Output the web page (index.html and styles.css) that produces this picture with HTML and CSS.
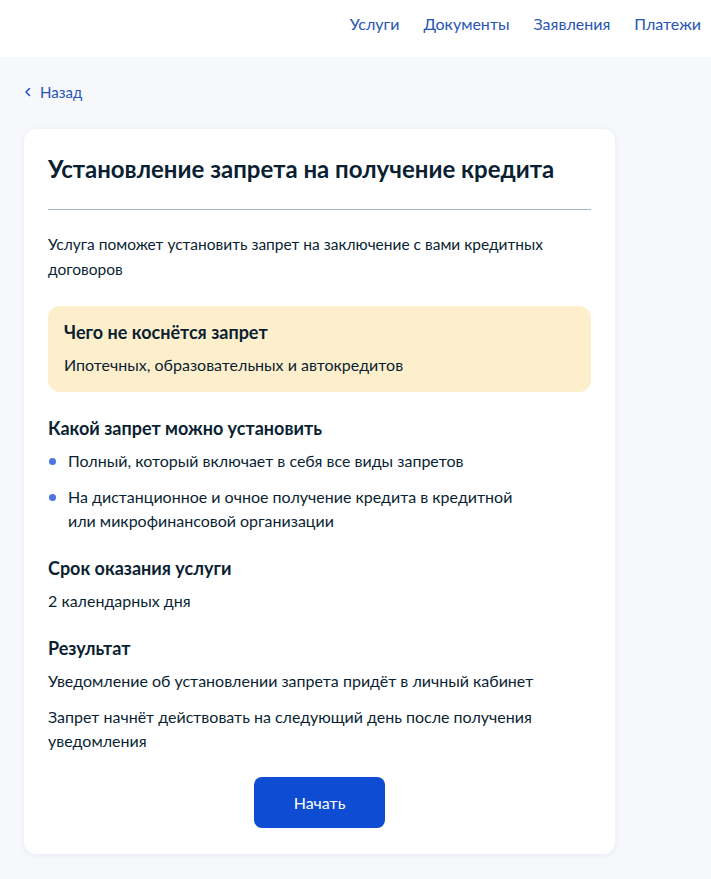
FILE: index.html
```html
<!DOCTYPE html>
<html lang="ru">
<head>
  <meta charset="UTF-8">
  <meta name="viewport" content="width=device-width, initial-scale=1.0">
  <title>Установление запрета на получение кредита</title>
  <link rel="stylesheet" href="styles.css">
</head>
<body>
  <header class="top-bar">
    <nav class="top-nav">
      <a href="#">Услуги</a>
      <a href="#">Документы</a>
      <a href="#">Заявления</a>
      <a href="#">Платежи</a>
    </nav>
  </header>

  <main class="page">
    <a href="#" class="back-link">
      <svg width="8" height="10" viewBox="0 0 8 10"><path d="M5.5 1.5 L2 5 L5.5 8.5" fill="none" stroke="currentColor" stroke-width="1.6" stroke-linecap="round" stroke-linejoin="round"/></svg>
      Назад
    </a>

    <section class="card">
      <h1 class="card-title">Установление запрета на получение кредита</h1>
      <hr class="divider">

      <p class="lead">Услуга поможет установить запрет на заключение с вами кредитных договоров</p>

      <div class="notice">
        <h3 class="notice-title">Чего не коснётся запрет</h3>
        <p class="text">Ипотечных, образовательных и автокредитов</p>
      </div>

      <div class="block">
        <h2 class="block-title">Какой запрет можно установить</h2>
        <ul class="dots">
          <li>Полный, который включает в себя все виды запретов</li>
          <li>На дистанционное и очное получение кредита в кредитной<br>или микрофинансовой организации</li>
        </ul>
      </div>

      <div class="block">
        <h2 class="block-title">Срок оказания услуги</h2>
        <p class="text">2 календарных дня</p>
      </div>

      <div class="block">
        <h2 class="block-title">Результат</h2>
        <p class="text">Уведомление об установлении запрета придёт в личный кабинет</p>
        <p class="text">Запрет начнёт действовать на следующий день после получения уведомления</p>
      </div>

      <div class="actions">
        <button class="btn-primary">Начать</button>
      </div>
    </section>
  </main>
</body>
</html>
```

FILE: styles.css
```css
body {
  margin: 0;
  background-color: #f7f8fc;
  font-family: Lato, "Noto Sans", sans-serif;
  color: #0b1f33;
}

.top-bar {
  background-color: #fff;
  height: 57px;
  box-sizing: border-box;
  padding-top: 14px;
  display: flex;
  justify-content: flex-end;
  align-items: flex-start;
}

.top-nav {
  display: flex;
  gap: 24px;
  margin-right: 10px;
}

.top-nav a {
  color: #2755b5;
  text-decoration: none;
  font-size: 16px;
  line-height: 20px;
}

.page {
  padding: 24px 24px 24px;
}

.back-link {
  display: inline-flex;
  align-items: center;
  gap: 8px;
  color: #2755b5;
  text-decoration: none;
  font-size: 15px;
}

.card {
  width: 543px;
  margin-top: 28px;
  background-color: #fff;
  border-radius: 12px;
  padding: 24px 24px 26px;
  box-shadow: 0 1px 6px rgba(30, 60, 140, 0.08);
}

.card-title {
  margin: 0;
  font-size: 24px;
  font-weight: 700;
  line-height: 32px;
}

.divider {
  border: none;
  border-top: 1px solid #a9b6c4;
  margin: 24px 0 22px;
}

.lead {
  margin: 0;
  font-size: 15.5px;
  line-height: 25px;
}

.text {
  margin: 0;
  font-size: 16px;
  line-height: 24px;
}

.text + .text {
  margin-top: 12px;
}

.notice {
  margin-top: 24px;
  background-color: #fdefcc;
  border-radius: 12px;
  padding: 14px 16px 15px;
}

.notice-title {
  margin: 0 0 9px;
  font-size: 18px;
  font-weight: 700;
  line-height: 24px;
}

.block {
  margin-top: 24px;
}

.block + .block {
  margin-top: 23px;
}

.block-title {
  margin: 0 0 9px;
  font-size: 18px;
  font-weight: 700;
  line-height: 24px;
}

.dots {
  list-style: none;
  margin: 0;
  padding: 0;
}

.dots li {
  position: relative;
  padding-left: 20px;
  font-size: 16px;
  line-height: 24px;
}

.dots li + li {
  margin-top: 12px;
}

.dots li::before {
  content: "";
  position: absolute;
  left: 1px;
  top: 9px;
  width: 7px;
  height: 7px;
  border-radius: 50%;
  background-color: #4b76e0;
}

.actions {
  display: flex;
  justify-content: center;
  margin-top: 24px;
}

.btn-primary {
  width: 131px;
  height: 51px;
  border: none;
  border-radius: 8px;
  background-color: #0d4cd3;
  color: #fff;
  font-family: Lato, "Noto Sans", sans-serif;
  font-size: 16px;
  cursor: pointer;
}
```
